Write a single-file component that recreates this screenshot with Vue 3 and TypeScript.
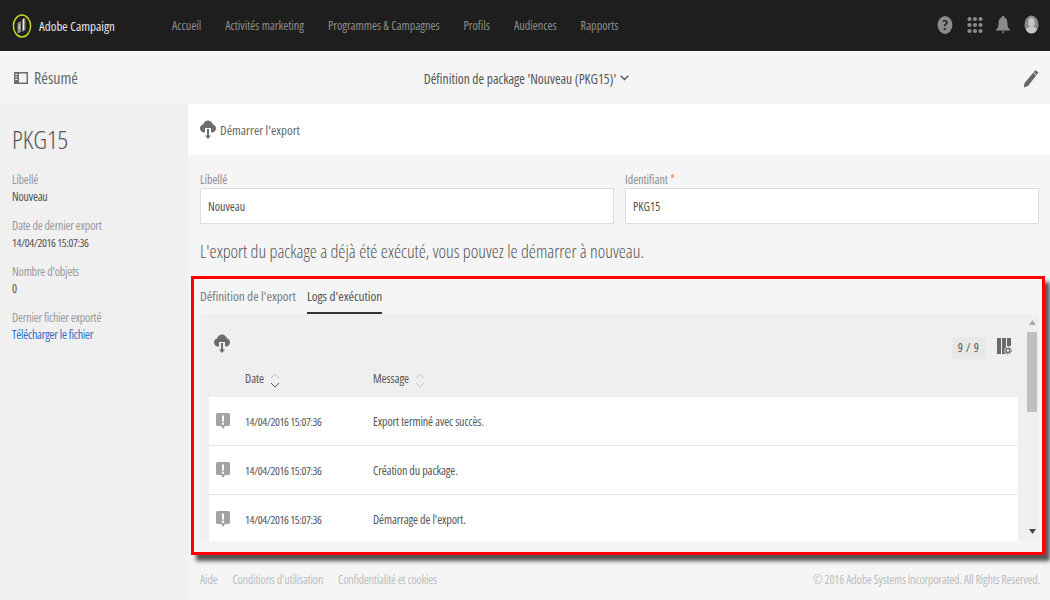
<script setup lang="ts">
const nav: string[] = ['Accueil', 'Activités marketing', 'Programmes & Campagnes', 'Profils', 'Audiences', 'Rapports']
const meta = [
  { label: 'Libellé', value: 'Nouveau', link: false, num: false },
  { label: 'Date de dernier export', value: '14/04/2016 15:07:36', link: false, num: true },
  { label: "Nombre d'objets", value: '0', link: false, num: false },
  { label: 'Dernier fichier exporté', value: 'Télécharger le fichier', link: true, num: false },
]
const rows = [
  { date: '14/04/2016 15:07:36', msg: 'Export terminé avec succès.' },
  { date: '14/04/2016 15:07:36', msg: 'Création du package.' },
  { date: '14/04/2016 15:07:36', msg: "Démarrage de l'export." },
]
const dots: number[][] = [[0,0],[1,0],[2,0],[0,1],[1,1],[2,1],[0,2],[1,2],[2,2]]
</script>

<template>
  <div class="page">
    <header class="top">
      <div class="brand">
        <svg class="logo" width="20" height="26" viewBox="0 0 20 26">
          <ellipse cx="10" cy="13" rx="8.6" ry="11" fill="#1e1e1e" stroke="#c4d42a" stroke-width="1.5"/>
          <path d="M5.500 10l3.500-2v11l-3.500 1.500zM10 6.500l3.500-1.500v12l-3.500 2z" fill="#8d8d80"/>
          <path d="M11.500 5.500v11.500M8 11.500c-1.500 1-1.500 3.500 0 4.500" fill="none" stroke="#e4e4e4" stroke-width="1"/>
        </svg>
        <span>Adobe Campaign</span>
      </div>
      <nav class="nav"><a v-for="n in nav" :key="n">{{ n }}</a></nav>
      <div class="tools">
        <svg width="16" height="20" viewBox="0 0 16 20"><ellipse cx="8" cy="10" rx="7.4" ry="9" fill="#8a8a8a"/><text x="8" y="15" text-anchor="middle" class="q">?</text></svg>
        <svg width="16" height="18" viewBox="0 0 16 18"><circle v-for="(d, i) in dots" :key="i" :cx="2.5 + d[0] * 5.5" :cy="3 + d[1] * 6" r="2.1" fill="#8a8a8a"/></svg>
        <svg width="14" height="20" viewBox="0 0 14 20"><path d="M7 1c1 0 1.500.7 1.500 1.600C11 3.600 11.500 6 11.500 9c0 3 1 4.500 2.500 5.500v1H0v-1C1.500 13.500 2.500 12 2.500 9c0-3 .5-5.400 3-6.400C5.500 1.700 6 1 7 1zM5.500 16.500h3L7 18.500z" fill="#8a8a8a"/></svg>
        <svg width="15" height="19" viewBox="0 0 15 19"><ellipse cx="7.500" cy="9.500" rx="7" ry="9" fill="#8a8a8a"/><ellipse cx="7.500" cy="7.500" rx="3.200" ry="4.500" fill="#c6c6c6"/><path d="M2 15c1-3 3-3.500 5.500-3.500S12 12 13 15c-1.500 2.500-3.500 3.500-5.500 3.500S3.500 17.500 2 15z" fill="#c6c6c6"/></svg>
      </div>
    </header>

    <div class="sub">
      <div class="sub-left">
        <svg width="14" height="14" viewBox="0 0 14 14"><path d="M0 1h14v12H0zM5 2.500v9h7.500v-9z" fill="#6e6e6e" fill-rule="evenodd"/><path d="M1.200 3h2.300v1H1.200zM1.200 5.500h2.300v1H1.200zM1.200 8h2.300v1H1.200z" fill="#f5f5f5"/></svg>
        <span>Résumé</span>
      </div>
      <div class="sub-title">
        <span>Définition de package 'Nouveau (PKG15)'</span>
        <svg width="9" height="6" viewBox="0 0 9 6"><path d="M.7.8l3.800 3.800L8.300.8" fill="none" stroke="#555" stroke-width="1.400"/></svg>
      </div>
      <svg class="pencil" width="16" height="19" viewBox="0 0 16 19"><path d="M12.500 1l3 2.500L5 17 .8 18.500 1.500 14z" fill="#666"/><path d="M10.600 3.600l3 2.400" stroke="#f5f5f5" stroke-width="1"/></svg>
    </div>

    <div class="body">
      <aside class="side">
        <h1>PKG15</h1>
        <dl>
          <div v-for="m in meta" :key="m.label" class="meta">
            <dt>{{ m.label }}</dt>
            <dd :class="{ link: m.link, num: m.num }">{{ m.value }}</dd>
          </div>
        </dl>
      </aside>

      <main class="main">
        <div class="action">
          <svg class="cloud" width="16" height="19" viewBox="0 0 16 19"><path d="M4 12.500C1.800 12.500 0 10.800 0 8.500c0-2 1.300-3.500 3-3.900C3.700 2.200 5.700.5 8 .5s4.300 1.700 5 4.100c1.700.4 3 1.900 3 3.900 0 2.300-1.800 4-4 4h-1V8H5v4.500z" fill="#6e6e6e"/><path d="M7 9h2v6.500h2L8 19l-3-3.500h2z" fill="#6e6e6e"/></svg>
          <span>Démarrer l'export</span>
        </div>

        <div class="content">
          <div class="form">
            <label class="field">
              <span class="flabel">Libellé</span>
              <span class="input">Nouveau</span>
            </label>
            <label class="field">
              <span class="flabel">Identifiant <i>*</i></span>
              <span class="input">PKG15</span>
            </label>
          </div>
          <p class="notice">L'export du package a déjà été exécuté, vous pouvez le démarrer à nouveau.</p>

          <div class="tabs">
            <span class="tab">Définition de l'export</span>
            <span class="tab active">Logs d'exécution</span>
          </div>

          <section class="panel">
            <div class="grid-area">
              <div class="toolbar">
                <svg class="cloud dl" width="16" height="19" viewBox="0 0 16 19"><path d="M4 12.500C1.800 12.500 0 10.800 0 8.500c0-2 1.300-3.500 3-3.900C3.700 2.200 5.700.5 8 .5s4.300 1.700 5 4.100c1.700.4 3 1.900 3 3.900 0 2.300-1.800 4-4 4h-1V8H5v4.500z" fill="#6a6a6a"/><path d="M7 9h2v6.500h2L8 19l-3-3.500h2z" fill="#6a6a6a"/></svg>
                <span class="count">9 / 9</span>
                <svg class="cols" width="15" height="17" viewBox="0 0 15 17"><path d="M0 0h4v16H0zM5 0h4v16H5zM10 0h4v8h-4z" fill="#6a6a6a"/><circle cx="11" cy="12.500" r="3.800" fill="#efefef"/><circle cx="11" cy="12.500" r="2" fill="none" stroke="#6a6a6a" stroke-width="1.400"/><circle cx="11" cy="12.500" r="3.500" fill="none" stroke="#6a6a6a" stroke-width="1" stroke-dasharray="1.300 1.400"/></svg>
              </div>
              <div class="thead">
                <span class="c-date">Date
                  <svg width="10" height="15" viewBox="0 0 10 15"><path d="M1 5l4-4 4 4" fill="none" stroke="#c0c0c0" stroke-width="1"/><path d="M1 10l4 4 4-4" fill="none" stroke="#555" stroke-width="1"/></svg>
                </span>
                <span class="c-msg">Message
                  <svg width="10" height="15" viewBox="0 0 10 15"><path d="M1 5l4-4 4 4M1 10l4 4 4-4" fill="none" stroke="#c8c8c8" stroke-width="1"/></svg>
                </span>
              </div>
              <div v-for="(r, i) in rows" :key="i" class="row">
                <svg class="alert" width="14" height="17" viewBox="0 0 14 17"><path d="M1.500 0h11A1.500 1.500 0 0 1 14 1.500v10a1.500 1.500 0 0 1-1.500 1.500H9l-2 3-2-3H1.500A1.500 1.500 0 0 1 0 11.500v-10A1.500 1.500 0 0 1 1.500 0z" fill="#a3a3a3"/><path d="M6 2.500h2V8.500H6zM6 9.800h2v2H6z" fill="#fff"/></svg>
                <span class="c-date num">{{ r.date }}</span>
                <span class="c-msg">{{ r.msg }}</span>
              </div>
            </div>
            <div class="scroll">
              <svg width="7" height="5" viewBox="0 0 7 5"><path d="M3.500 0L7 5H0z" fill="#a8a8a8"/></svg>
              <div class="track"><div class="thumb"></div></div>
              <svg width="7" height="5" viewBox="0 0 7 5"><path d="M0 0h7L3.500 5z" fill="#444"/></svg>
            </div>
          </section>
        </div>

        <footer class="foot">
          <div class="foot-links"><a>Aide</a><a>Conditions d'utilisation</a><a>Confidentialité et cookies</a></div>
          <span>© 2016 Adobe Systems Incorporated. All Rights Reserved.</span>
        </footer>
      </main>
    </div>

    <div class="highlight"></div>
  </div>
</template>

<style>
html, body { margin: 0; background: #f5f5f5; }
</style>

<style scoped>
.page {
  position: relative;
  width: 1050px;
  height: 600px;
  overflow: hidden;
  background: #f5f5f5;
  font-family: "Open Sans", sans-serif;
  font-stretch: condensed;
  font-size: 12px;
  color: #4b4b4b;
  display: flex;
  flex-direction: column;
}
.top {
  height: 51px;
  flex: none;
  background: #1e1e1e;
  border-bottom: 1px solid #f9f9f9;
  display: flex;
  align-items: center;
  padding-left: 12px;
}
.brand { display: flex; align-items: center; gap: 7px; width: 160px; color: #e8e8e8; font-size: 13px; }
.logo { flex: none; }
.nav { display: flex; gap: 24px; color: #8f8f8f; font-size: 12.150px; }
.tools { margin-left: auto; width: 113px; display: flex; align-items: center; gap: 13.500px; padding-bottom: 2px; }
.q { font: 700 14px Lato, sans-serif; fill: #1e1e1e; }
.sub {
  height: 52px;
  flex: none;
  display: grid;
  grid-template-columns: 1fr auto 1fr;
  align-items: center;
  padding: 0 11px 0 14px;
}
.pencil { justify-self: end; }
.sub-left { display: flex; align-items: center; gap: 6px; font-size: 16px; color: #666; }
.sub-title { display: flex; align-items: center; gap: 4px; font-size: 13.600px; color: #555; }
.body { flex: 1; display: flex; min-height: 0; }
.side { width: 188px; flex: none; background: #f0f0f0; padding: 21px 12px 0; box-sizing: border-box; }
.side h1 { margin: 0 0 18px; font-weight: 300; font-size: 26px; line-height: 28px; color: #555; }
dl { margin: 0; }
.meta { margin-bottom: 18px; line-height: 17px; height: 28px; }
dt { color: #999; font-size: 12px; letter-spacing: -0.18px; }
dd { margin: 0; color: #505050; font-size: 12px; letter-spacing: -0.22px; }
dd.link { color: #2d6fc9; }
.num { font-size: 11.500px; letter-spacing: -0.4px; }
dd.num { font-size: 11.500px; letter-spacing: -0.4px; }
.main { flex: 1; min-width: 0; display: flex; flex-direction: column; }
.action { height: 51px; background: #fff; display: flex; align-items: center; gap: 4px; padding-left: 12px; color: #666; font-size: 13px; }
.content { padding: 0 11px 0 12px; }
.form { display: flex; gap: 11px; padding-top: 17px; }
.field { flex: 1; display: block; }
.flabel { display: block; color: #8c8c8c; font-size: 12px; line-height: 16px; height: 16px; }
.flabel i { color: #e5883c; font-style: normal; }
.input { display: block; height: 34px; line-height: 36px; background: #fff; border: 1px solid #dcdcdc; padding-left: 7px; color: #505050; font-size: 12px; }
.notice { margin: 16px 0 0; font-size: 18px; line-height: 22px; color: #555; font-weight: 300; }
.tabs { display: flex; gap: 11px; margin-top: 16px; height: 36px; }
.tab { height: 36px; line-height: 36px; box-sizing: border-box; color: #777; font-size: 13.200px; }
.tab.active { color: #505050; border-bottom: 2px solid #333; }
.panel { height: 227px; background: #efefef; display: flex; overflow: hidden; border-radius: 2px; }
.grid-area { width: 818px; flex: none; padding-left: 9px; box-sizing: border-box; }
.toolbar { height: 49px; border-bottom: 1px solid #eaeaea; display: flex; align-items: center; padding: 0 6px 0 5px; }
.toolbar .dl { margin-right: auto; margin-top: 10px; }
.count { background: #e8e8e8; border-radius: 2px; height: 22px; line-height: 22px; width: 33px; text-align: center; font-size: 12px; letter-spacing: .5px; color: #555; margin-right: 12px; margin-top: 18px; }
.cols { margin-top: 16px; }
.thead { height: 33px; display: flex; align-items: center; color: #555; font-size: 12px; padding-bottom: 3px; box-sizing: border-box; }
.thead svg { vertical-align: middle; margin-left: 4px; }
.c-date { margin-left: 36px; width: 128px; flex: none; }
.c-msg { flex: 1; }
.row { height: 48px; background: #fff; border-bottom: 1px solid #e6e6e6; display: flex; align-items: center; font-size: 12px; letter-spacing: -0.1px; color: #555; position: relative; }
.alert { position: absolute; left: 7px; top: 16px; }
.scroll { width: 10px; margin-left: 9px; padding: 6px 0 7px; flex: none; display: flex; flex-direction: column; align-items: center; height: 100%; box-sizing: border-box; }
.track { flex: 1; width: 100%; padding-top: 7px; }
.thumb { width: 100%; height: 80px; background: #bfbfbf; }
.foot { display: flex; justify-content: space-between; align-items: center; padding: 0 10px 0 12px; margin-top: 30px; font-size: 12px; letter-spacing: -0.2px; color: #bdbdbd; }
.foot-links { display: flex; gap: 15px; }
.highlight {
  position: absolute;
  left: 191px;
  top: 276px;
  width: 854px;
  height: 279px;
  box-sizing: border-box;
  border: 3px solid #f00;
  box-shadow: 5px 6px 4px #555;
  pointer-events: none;
}
</style>
